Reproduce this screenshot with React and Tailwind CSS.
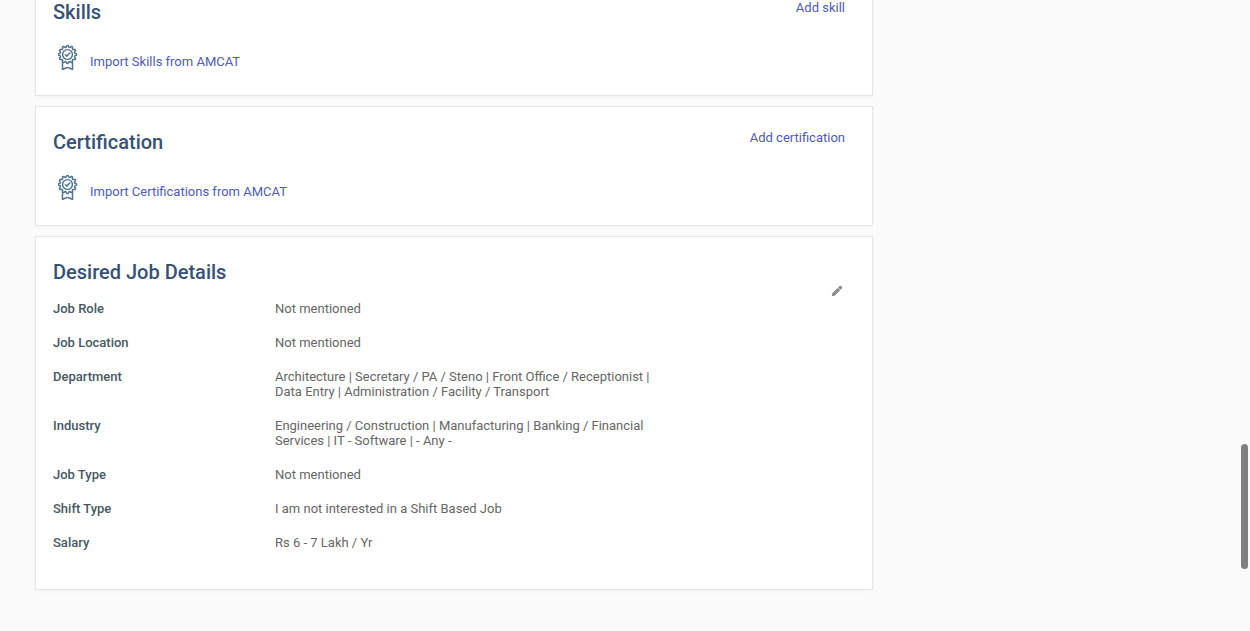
import React from "react";

const BADGE_TEETH = 12;

// Rounded rosette edge: alternates between outer lobes and inner notches.
const rosette = Array.from({ length: BADGE_TEETH * 4 }, (_, i) => {
  const angle = ((i - 0.5) / (BADGE_TEETH * 4)) * Math.PI * 2;
  const r = i % 4 < 2 ? 9 : 7.4;
  return `${(9.5 + r * Math.cos(angle)).toFixed(2)},${(9.5 + r * Math.sin(angle)).toFixed(2)}`;
}).join(" ");

function BadgeIcon() {
  return (
    <svg
      viewBox="0 0 20 26"
      className="h-[26px] w-5 shrink-0"
      fill="none"
      stroke="#4f7390"
      strokeWidth="1.5"
      strokeLinejoin="round"
      strokeLinecap="round"
      aria-hidden="true"
    >
      <polygon points={rosette} />
      <circle cx="9.5" cy="9.5" r="4.9" strokeWidth="1.4" />
      <path d="M7.4 9.7 L8.9 11.1 L11.8 8.1" />
      <path d="M4.5 17 V24.4 L7.2 23.2 L9.5 22.4 L11.8 23.2 L14.5 24.4 V17" />
    </svg>
  );
}

function PencilIcon() {
  return (
    <svg viewBox="0 0 12 12" className="h-3 w-3" fill="#8b8b8b" aria-hidden="true">
      <path d="M0.8 11.2 L1.3 8.3 L6.8 2.8 L9.2 5.2 L3.7 10.7 Z" />
      <path d="M7.2 2.4 L8.5 1.1 Q9.5 0.3 10.4 1.2 L10.9 1.7 Q11.7 2.5 10.9 3.5 L9.6 4.8 Z" />
    </svg>
  );
}

function Card({ className = "", children }) {
  return (
    <section
      className={`border border-[#e6e6e6] bg-white pt-[23px] pr-[27px] pl-[17px] shadow-[0_1px_4px_rgba(0,0,0,0.04)] ${className}`}
    >
      {children}
    </section>
  );
}

function Title({ children }) {
  return <h2 className="text-xl leading-6 font-medium text-[#375174]">{children}</h2>;
}

function ImportCard({ title, action, importLabel }) {
  return (
    <Card className="pb-6">
      <div className="flex items-start justify-between">
        <Title>{title}</Title>
        <a href="#add" className="text-[#4f5bb5]">
          {action}
        </a>
      </div>
      <a href="#import" className="mt-[21px] ml-[5px] flex items-end gap-3 text-[#4f5bb5]">
        <BadgeIcon />
        <span className="pb-0.5">{importLabel}</span>
      </a>
    </Card>
  );
}

const details = [
  ["Job Role", "Not mentioned"],
  ["Job Location", "Not mentioned"],
  [
    "Department",
    "Architecture | Secretary / PA / Steno | Front Office / Receptionist | Data Entry | Administration / Facility / Transport",
  ],
  [
    "Industry",
    "Engineering / Construction | Manufacturing | Banking / Financial Services | IT - Software | - Any -",
  ],
  ["Job Type", "Not mentioned"],
  ["Shift Type", "I am not interested in a Shift Based Job"],
  ["Salary", "Rs 6 - 7 Lakh / Yr"],
];

export default function App() {
  return (
    <div className="min-h-screen overflow-hidden bg-[#fbfbfb] px-[35px] pb-10 font-[Roboto,sans-serif] text-[13px] leading-[15px]">
      <main className="-mt-6 flex max-w-[838px] flex-col gap-2.5">
        <ImportCard title="Skills" action="Add skill" importLabel="Import Skills from AMCAT" />
        <ImportCard
          title="Certification"
          action="Add certification"
          importLabel="Import Certifications from AMCAT"
        />
        <Card className="pb-[39px]">
          <Title>Desired Job Details</Title>
          <div className="mt-[17px] flex items-start justify-between">
            <dl className="flex flex-col gap-[19px]">
              {details.map(([label, value]) => (
                <div key={label} className="flex">
                  <dt className="w-[222px] shrink-0 font-medium text-[#465862]">{label}</dt>
                  <dd className="max-w-[385px] text-[#666666]">{value}</dd>
                </div>
              ))}
            </dl>
            <button type="button" aria-label="Edit desired job details" className="-mt-4 mr-0.5">
              <PencilIcon />
            </button>
          </div>
        </Card>
      </main>
      <div className="fixed top-[444px] right-0.5 h-[125px] w-[7px] rounded-full bg-[#7f7f7f]" />
    </div>
  );
}
